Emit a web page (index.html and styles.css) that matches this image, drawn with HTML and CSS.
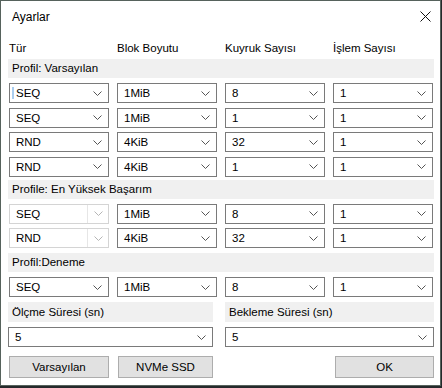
FILE: index.html
```html
<!DOCTYPE html>
<html lang="tr">
<head>
<meta charset="utf-8">
<title>Ayarlar</title>
<link rel="stylesheet" href="styles.css">
</head>
<body>
<div class="window">
  <div class="titlebar">
    <span class="title">Ayarlar</span>
    <svg class="close" width="11" height="11" viewBox="0 0 11 11"><path d="M0.5 0.5 L10.5 10.5 M10.5 0.5 L0.5 10.5" stroke="#111" stroke-width="1" fill="none"/></svg>
  </div>
  <div class="content">
    <div class="grid4 headers">
      <span>Tür</span><span>Blok Boyutu</span><span>Kuyruk Sayısı</span><span>İşlem Sayısı</span>
    </div>

    <div class="band">Profil: Varsayılan</div>
    <div class="grid4 rows">
      <div class="combo focused"><span class="caret"></span><span class="val">SEQ</span><svg class="chev" width="9" height="5" viewBox="0 0 9 5"><polyline points="0.5,0.5 4.5,4.5 8.5,0.5"/></svg></div>
      <div class="combo"><span class="val">1MiB</span><svg class="chev" width="9" height="5" viewBox="0 0 9 5"><polyline points="0.5,0.5 4.5,4.5 8.5,0.5"/></svg></div>
      <div class="combo"><span class="val">8</span><svg class="chev" width="9" height="5" viewBox="0 0 9 5"><polyline points="0.5,0.5 4.5,4.5 8.5,0.5"/></svg></div>
      <div class="combo"><span class="val">1</span><svg class="chev" width="9" height="5" viewBox="0 0 9 5"><polyline points="0.5,0.5 4.5,4.5 8.5,0.5"/></svg></div>

      <div class="combo"><span class="val">SEQ</span><svg class="chev" width="9" height="5" viewBox="0 0 9 5"><polyline points="0.5,0.5 4.5,4.5 8.5,0.5"/></svg></div>
      <div class="combo"><span class="val">1MiB</span><svg class="chev" width="9" height="5" viewBox="0 0 9 5"><polyline points="0.5,0.5 4.5,4.5 8.5,0.5"/></svg></div>
      <div class="combo"><span class="val">1</span><svg class="chev" width="9" height="5" viewBox="0 0 9 5"><polyline points="0.5,0.5 4.5,4.5 8.5,0.5"/></svg></div>
      <div class="combo"><span class="val">1</span><svg class="chev" width="9" height="5" viewBox="0 0 9 5"><polyline points="0.5,0.5 4.5,4.5 8.5,0.5"/></svg></div>

      <div class="combo"><span class="val">RND</span><svg class="chev" width="9" height="5" viewBox="0 0 9 5"><polyline points="0.5,0.5 4.5,4.5 8.5,0.5"/></svg></div>
      <div class="combo"><span class="val">4KiB</span><svg class="chev" width="9" height="5" viewBox="0 0 9 5"><polyline points="0.5,0.5 4.5,4.5 8.5,0.5"/></svg></div>
      <div class="combo"><span class="val">32</span><svg class="chev" width="9" height="5" viewBox="0 0 9 5"><polyline points="0.5,0.5 4.5,4.5 8.5,0.5"/></svg></div>
      <div class="combo"><span class="val">1</span><svg class="chev" width="9" height="5" viewBox="0 0 9 5"><polyline points="0.5,0.5 4.5,4.5 8.5,0.5"/></svg></div>

      <div class="combo"><span class="val">RND</span><svg class="chev" width="9" height="5" viewBox="0 0 9 5"><polyline points="0.5,0.5 4.5,4.5 8.5,0.5"/></svg></div>
      <div class="combo"><span class="val">4KiB</span><svg class="chev" width="9" height="5" viewBox="0 0 9 5"><polyline points="0.5,0.5 4.5,4.5 8.5,0.5"/></svg></div>
      <div class="combo"><span class="val">1</span><svg class="chev" width="9" height="5" viewBox="0 0 9 5"><polyline points="0.5,0.5 4.5,4.5 8.5,0.5"/></svg></div>
      <div class="combo"><span class="val">1</span><svg class="chev" width="9" height="5" viewBox="0 0 9 5"><polyline points="0.5,0.5 4.5,4.5 8.5,0.5"/></svg></div>
    </div>

    <div class="band band2">Profile: En Yüksek Başarım</div>
    <div class="grid4 rows">
      <div class="combo disabled"><span class="val">SEQ</span><span class="btnpart"><svg class="chev" width="9" height="5" viewBox="0 0 9 5"><polyline points="0.5,0.5 4.5,4.5 8.5,0.5"/></svg></span></div>
      <div class="combo"><span class="val">1MiB</span><svg class="chev" width="9" height="5" viewBox="0 0 9 5"><polyline points="0.5,0.5 4.5,4.5 8.5,0.5"/></svg></div>
      <div class="combo"><span class="val">8</span><svg class="chev" width="9" height="5" viewBox="0 0 9 5"><polyline points="0.5,0.5 4.5,4.5 8.5,0.5"/></svg></div>
      <div class="combo"><span class="val">1</span><svg class="chev" width="9" height="5" viewBox="0 0 9 5"><polyline points="0.5,0.5 4.5,4.5 8.5,0.5"/></svg></div>

      <div class="combo disabled"><span class="val">RND</span><span class="btnpart"><svg class="chev" width="9" height="5" viewBox="0 0 9 5"><polyline points="0.5,0.5 4.5,4.5 8.5,0.5"/></svg></span></div>
      <div class="combo"><span class="val">4KiB</span><svg class="chev" width="9" height="5" viewBox="0 0 9 5"><polyline points="0.5,0.5 4.5,4.5 8.5,0.5"/></svg></div>
      <div class="combo"><span class="val">32</span><svg class="chev" width="9" height="5" viewBox="0 0 9 5"><polyline points="0.5,0.5 4.5,4.5 8.5,0.5"/></svg></div>
      <div class="combo"><span class="val">1</span><svg class="chev" width="9" height="5" viewBox="0 0 9 5"><polyline points="0.5,0.5 4.5,4.5 8.5,0.5"/></svg></div>
    </div>

    <div class="band band3">Profil:Deneme</div>
    <div class="grid4 rows">
      <div class="combo"><span class="val">SEQ</span><svg class="chev" width="9" height="5" viewBox="0 0 9 5"><polyline points="0.5,0.5 4.5,4.5 8.5,0.5"/></svg></div>
      <div class="combo"><span class="val">1MiB</span><svg class="chev" width="9" height="5" viewBox="0 0 9 5"><polyline points="0.5,0.5 4.5,4.5 8.5,0.5"/></svg></div>
      <div class="combo"><span class="val">8</span><svg class="chev" width="9" height="5" viewBox="0 0 9 5"><polyline points="0.5,0.5 4.5,4.5 8.5,0.5"/></svg></div>
      <div class="combo"><span class="val">1</span><svg class="chev" width="9" height="5" viewBox="0 0 9 5"><polyline points="0.5,0.5 4.5,4.5 8.5,0.5"/></svg></div>
    </div>

    <div class="grid2">
      <div class="band">Ölçme Süresi (sn)</div>
      <div class="band">Bekleme Süresi (sn)</div>
      <div class="combo"><span class="val">5</span><svg class="chev" width="9" height="5" viewBox="0 0 9 5"><polyline points="0.5,0.5 4.5,4.5 8.5,0.5"/></svg></div>
      <div class="combo"><span class="val">5</span><svg class="chev" width="9" height="5" viewBox="0 0 9 5"><polyline points="0.5,0.5 4.5,4.5 8.5,0.5"/></svg></div>
    </div>

    <div class="buttons">
      <button class="btn b-def">Varsayılan</button>
      <button class="btn b-nvme">NVMe SSD</button>
      <button class="btn b-ok">OK</button>
    </div>
  </div>
</div>
</body>
</html>
```

FILE: styles.css
```css
* { box-sizing: border-box; }
html, body { margin: 0; padding: 0; }
body {
  background: #25292b;
  width: 442px;
  height: 388px;
  overflow: hidden;
  font-family: "Liberation Sans", Arial, sans-serif;
  font-size: 11.5px;
  color: #000;
}
.window {
  width: 441px;
  height: 386px;
  background: #fff;
  border: 1px solid #56625c;
  display: flex;
  flex-direction: column;
}
.titlebar {
  height: 30px;
  display: flex;
  align-items: center;
  padding-left: 11px;
  padding-right: 9px;
  justify-content: space-between;
  flex-shrink: 0;
}
.title { font-size: 12px; padding-top: 1px; }
.close { display: block; margin-top: 1px; }
.content {
  padding: 0 6px 0 7px;
  display: flex;
  flex-direction: column;
}
.grid4 {
  display: grid;
  grid-template-columns: repeat(4, 100px);
  column-gap: 8px;
  padding-left: 1px;
}
.headers {
  margin-top: 9px;
  height: 16px;
  line-height: 16px;
}
.band {
  background: #f0f0f0;
  height: 19px;
  line-height: 19px;
  padding-left: 4px;
  margin-top: 3px;
  white-space: nowrap;
}
.band2 { margin-top: 3px; }
.band3 { margin-top: 5px; }
.rows {
  margin-top: 5px;
  row-gap: 4.5px;
}
.combo {
  position: relative;
  height: 20px;
  border: 1px solid #7a7a7a;
  background: #fff;
  display: flex;
  align-items: center;
  padding-left: 6px;
  padding-right: 6px;
}
.combo .val { flex: 1; line-height: 18px; }
.chev { display: block; }
.chev polyline { fill: none; stroke: #555; stroke-width: 1; }
.caret {
  position: absolute;
  left: 2px;
  top: 3px;
  width: 2px;
  height: 12px;
  background: #a9cdef;
}
.combo.disabled {
  border-color: #d4d4d4;
  padding-right: 0;
}
.combo.disabled .btnpart {
  height: 100%;
  width: 21px;
  border-left: 1px solid #e6e6e6;
  display: flex;
  align-items: center;
  justify-content: center;
}
.combo.disabled .chev polyline { stroke: #b5b5b5; }
.grid2 {
  display: grid;
  grid-template-columns: 205px 1fr;
  column-gap: 12px;
  row-gap: 5px;
  margin-top: 5px;
}
.grid2 .band { margin-top: 0; height: 20px; line-height: 20px; }
.buttons {
  display: flex;
  margin-top: 9px;
  padding-left: 1px;
  gap: 9px;
}
.btn {
  height: 22px;
  background: #e1e1e1;
  border: 1px solid #adadad;
  font-family: inherit;
  font-size: 11.5px;
  color: #000;
  padding: 0;
  margin: 0;
}
.b-def { width: 100px; }
.b-nvme { width: 95px; }
.b-ok { width: 99px; margin-left: auto; }
```
